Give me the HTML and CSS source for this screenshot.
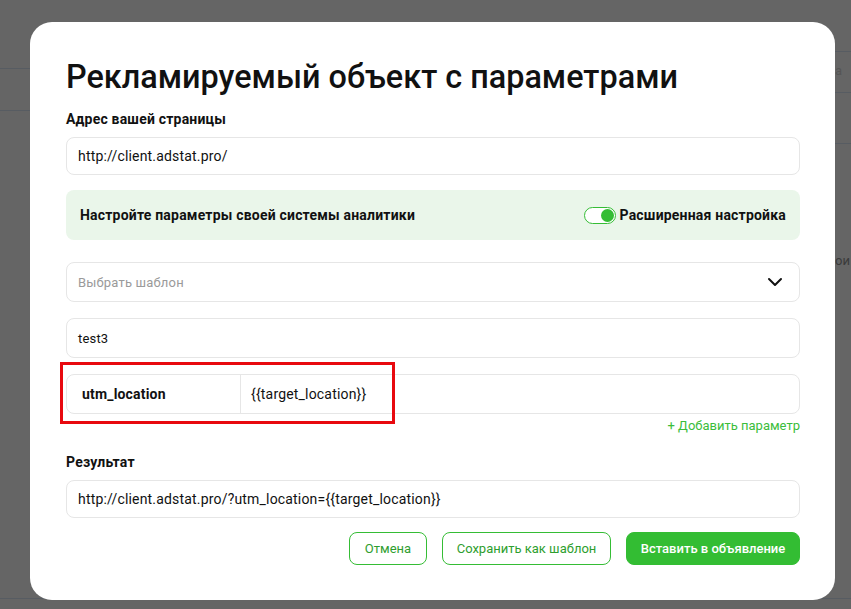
FILE: index.html
```html
<!DOCTYPE html>
<html lang="ru">
<head>
    <meta charset="UTF-8">
    <meta name="viewport" content="width=device-width, initial-scale=1.0">
    <title>Рекламируемый объект с параметрами</title>
    <link rel="stylesheet" href="styles.css">
</head>
<body>
    <div class="backdrop">
        <div class="bg-line line1"></div>
        <div class="bg-line line2"></div>
        <div class="bg-line line3"></div>
        <div class="bg-line line4"></div>
        <div class="bg-line line5"></div>
        <div class="bg-line line6"></div>
        <span class="bg-text text1">а</span>
        <span class="bg-text text2">ои</span>
    </div>

    <div class="modal">
        <h1>Рекламируемый объект с параметрами</h1>

        <div class="field">
            <label class="label" for="pageUrl">Адрес вашей страницы</label>
            <div class="input" id="pageUrl">http://client.adstat.pro/</div>
        </div>

        <div class="analytics">
            <span>Настройте параметры своей системы аналитики</span>
            <div class="switch-wrap">
                <span class="switch"><span class="knob"></span></span>
                <span>Расширенная настройка</span>
            </div>
        </div>

        <div class="input select">
            <span class="placeholder">Выбрать шаблон</span>
            <svg width="16" height="10" viewBox="0 0 16 10">
                <path d="M2 2l6 6 6-6" fill="none" stroke="#111" stroke-width="2" stroke-linecap="round" stroke-linejoin="round"/>
            </svg>
        </div>

        <div class="input name">test3</div>

        <div class="param-wrap">
            <div class="param">
                <div class="param-key">utm_location</div>
                <div class="param-value">{{target_location}}</div>
            </div>
            <div class="highlight"></div>
        </div>

        <div class="add-row">
            <a class="add-link">+ Добавить параметр</a>
        </div>

        <div class="field result">
            <div class="label">Результат</div>
            <div class="input">http://client.adstat.pro/?utm_location={{target_location}}</div>
        </div>

        <div class="actions">
            <button class="btn btn-outline btn-cancel">Отмена</button>
            <button class="btn btn-outline btn-save">Сохранить как шаблон</button>
            <button class="btn btn-primary">Вставить в объявление</button>
        </div>
    </div>
</body>
</html>
```

FILE: styles.css
```css
* {
    box-sizing: border-box;
}

body {
    margin: 0;
    width: 851px;
    height: 609px;
    overflow: hidden;
    background-color: #656565;
    font-family: Roboto, "Liberation Sans", Arial, sans-serif;
    color: #111;
    position: relative;
}

.backdrop {
    position: absolute;
    inset: 0;
}

.bg-line {
    position: absolute;
    height: 1px;
    background-color: #575c62;
}

.line1 { left: 0; width: 40px; top: 68px; }
.line2 { left: 0; width: 40px; top: 110px; }
.line3 { right: 0; width: 30px; top: 51px; }
.line4 { right: 0; width: 30px; top: 92px; }
.line5 { right: 0; width: 30px; top: 143px; }
.line6 { left: 0; right: 0; top: 598px; }

.bg-text {
    position: absolute;
    font-size: 13px;
    color: #3a3a3a;
}

.text1 { left: 835px; top: 63px; color: #555; }
.text2 { left: 835px; top: 253px; }

.modal {
    position: relative;
    margin: 22px 0 0 30px;
    width: 805px;
    height: 578px;
    background-color: #fff;
    border-radius: 22px;
    padding: 35px 35px 0 36px;
}

h1 {
    margin: 0 0 13px;
    font-size: 32.4px;
    font-weight: 500;
    line-height: 40px;
    letter-spacing: 0;
}

.label {
    display: block;
    font-size: 14px;
    font-weight: 700;
    line-height: 18px;
    letter-spacing: 0.2px;
    margin-bottom: 9px;
}

.input {
    height: 38px;
    border: 1px solid #e6e6e6;
    border-radius: 8px;
    padding: 0 11px;
    display: flex;
    align-items: center;
    font-size: 14px;
    letter-spacing: 0.18px;
    color: #111;
}

.analytics {
    margin-top: 15px;
    height: 50px;
    background-color: #eaf6ea;
    border-radius: 8px;
    padding: 0 14px;
    display: flex;
    align-items: center;
    justify-content: space-between;
    font-size: 14px;
    font-weight: 700;
    letter-spacing: 0.2px;
}

.switch-wrap {
    display: flex;
    align-items: center;
    gap: 4px;
}

.switch {
    width: 32px;
    height: 17px;
    border: 1px solid #35bd35;
    border-radius: 9px;
    background-color: #fff;
    position: relative;
}

.knob {
    position: absolute;
    right: 1px;
    top: 1px;
    width: 13px;
    height: 13px;
    border-radius: 50%;
    background-color: #35bd35;
}

.select {
    margin-top: 22px;
    height: 40px;
    justify-content: space-between;
    padding-right: 16px;
}

.placeholder {
    color: #9a9a9a;
    font-size: 13px;
}

.name {
    margin-top: 16px;
    height: 40px;
    font-size: 13px;
}

.param-wrap {
    position: relative;
    margin-top: 16px;
}

.param {
    height: 40px;
    border: 1px solid #e6e6e6;
    border-radius: 8px;
    display: flex;
    font-size: 14px;
    letter-spacing: 0.18px;
}

.param-key {
    width: 174px;
    border-right: 1px solid #e6e6e6;
    padding-left: 15px;
    font-weight: 700;
    display: flex;
    align-items: center;
}

.param-value {
    padding-left: 10px;
    display: flex;
    align-items: center;
}

.highlight {
    position: absolute;
    left: -6px;
    top: -12px;
    width: 335px;
    height: 62px;
    border: 3px solid #e8090f;
}

.add-row {
    display: flex;
    justify-content: flex-end;
    margin-top: 4px;
    height: 20px;
}

.add-link {
    color: #3bbd3b;
    font-size: 13px;
    line-height: 16px;
}

.result {
    margin-top: 15px;
}

.result .label {
    margin-bottom: 9px;
}

.actions {
    margin-top: 14px;
    display: flex;
    justify-content: flex-end;
    gap: 15px;
}

.btn {
    height: 33px;
    border-radius: 8px;
    font-family: inherit;
    font-size: 13px;
    cursor: pointer;
    padding: 0;
    white-space: nowrap;
    text-align: center;
}

.btn-outline {
    background-color: #fff;
    border: 1px solid #35bd35;
    color: #2e9e2e;
}

.btn-cancel {
    width: 78px;
}

.btn-save {
    width: 169px;
}

.btn-primary {
    background-color: #33bd33;
    border: 1px solid #33bd33;
    color: #fff;
    font-weight: 500;
    width: 174px;
}
```
